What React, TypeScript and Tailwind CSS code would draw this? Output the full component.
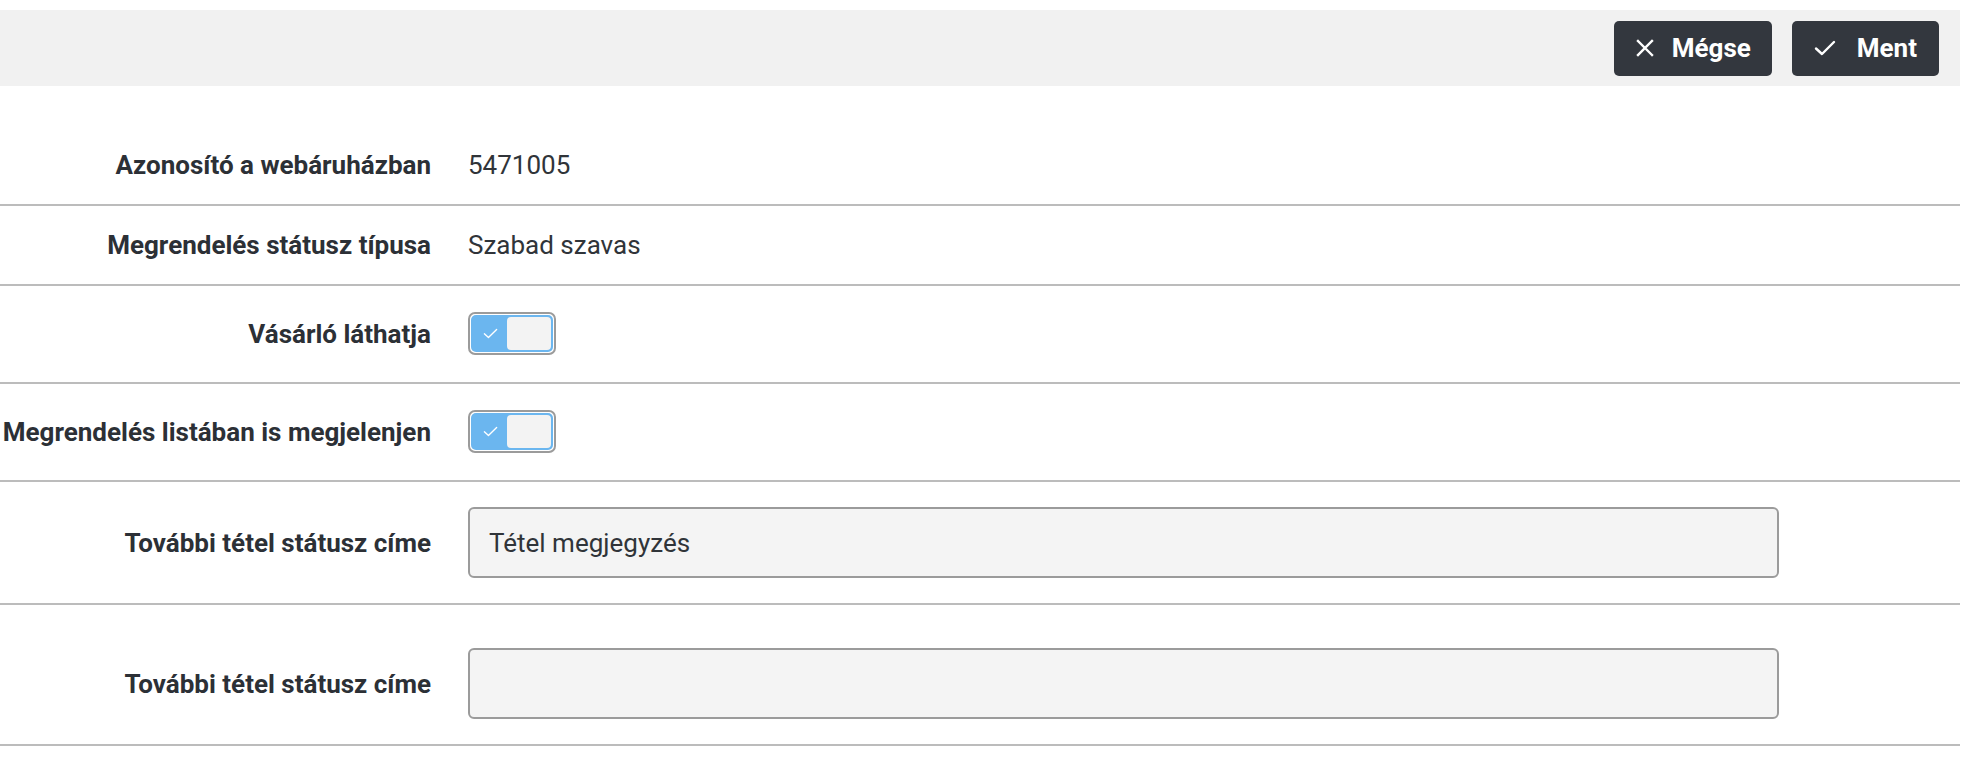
import React from 'react';

const font = { fontFamily: 'Roboto, "Liberation Sans", sans-serif' };

const XIcon = () => (
  <svg width="20" height="20" viewBox="0 0 20 20" fill="none" stroke="currentColor" strokeWidth="2.4" strokeLinecap="square">
    <path d="M3 3 L17 17 M17 3 L3 17" />
  </svg>
);

const CheckIcon = ({ size = 22, stroke = 2.4 }: { size?: number; stroke?: number }) => (
  <svg width={size} height={size} viewBox="0 0 22 22" fill="none" stroke="currentColor" strokeWidth={stroke} strokeLinecap="round" strokeLinejoin="round">
    <path d="M2 11.5 L8 17 L20 5" />
  </svg>
);

const Toggle = () => (
  <div className="w-[88px] h-[43px] border-2 border-[#9b9b9b] rounded-[7px] bg-white p-px">
    <div className="flex h-full bg-[#6bb6ef] rounded-[5px] p-[2px]">
      <div className="flex w-[34px] items-center justify-center text-white">
        <CheckIcon size={15} stroke={2} />
      </div>
      <div className="flex-1 bg-[#f3f3f3] rounded-[4px]" />
    </div>
  </div>
);

const Row = ({
  label,
  children,
  className = 'py-[20px]'
}: {
  label: string;
  children: React.ReactNode;
  className?: string;
}) => (
  <div className={`flex items-center border-b-2 border-[#bcbcbc] ${className}`}>
    <div className="w-[431px] shrink-0 text-right font-bold text-[26px] leading-[38px] text-[#2c3036] whitespace-nowrap">
      {label}
    </div>
    <div className="ml-[37px] flex-1 text-[26px] leading-[38px] text-[#303439]">{children}</div>
  </div>
);

export default function App() {
  return (
    <div className="min-h-screen bg-white pt-[10px]" style={font}>
      <div className="w-[1960px]">
        {/* fejléc gombok */}
        <div className="flex h-[76px] items-center justify-end gap-[20px] bg-[#f1f1f1] pr-[21px]">
          <button className="flex h-[55px] items-center gap-[17px] rounded-[5px] bg-[#33373e] px-[21px] text-[26px] font-bold text-white">
            <XIcon />
            Mégse
          </button>
          <button className="flex h-[55px] items-center gap-[21px] rounded-[5px] bg-[#33373e] px-[22px] text-[26px] font-bold text-white">
            <CheckIcon />
            Ment
          </button>
        </div>

        <div className="mt-[40px]">
          <Row label="Azonosító a webáruházban">5471005</Row>
          <Row label="Megrendelés státusz típusa">Szabad szavas</Row>
          <Row label="Vásárló láthatja" className="pt-[26px] pb-[27px]">
            <Toggle />
          </Row>
          <Row label="Megrendelés listában is megjelenjen" className="pt-[26px] pb-[27px]">
            <Toggle />
          </Row>
          <Row label="További tétel státusz címe" className="pt-[25px] pb-[25px]">
            <div className="flex h-[71px] w-[1311px] items-center rounded-[6px] border-2 border-[#9b9b9b] bg-[#f4f4f4] px-[19px]">
              Tétel megjegyzés
            </div>
          </Row>
          <Row label="További tétel státusz címe" className="pt-[43px] pb-[25px]">
            <div className="h-[71px] w-[1311px] rounded-[6px] border-2 border-[#9b9b9b] bg-[#f4f4f4]" />
          </Row>
        </div>
      </div>
    </div>
  );
}
